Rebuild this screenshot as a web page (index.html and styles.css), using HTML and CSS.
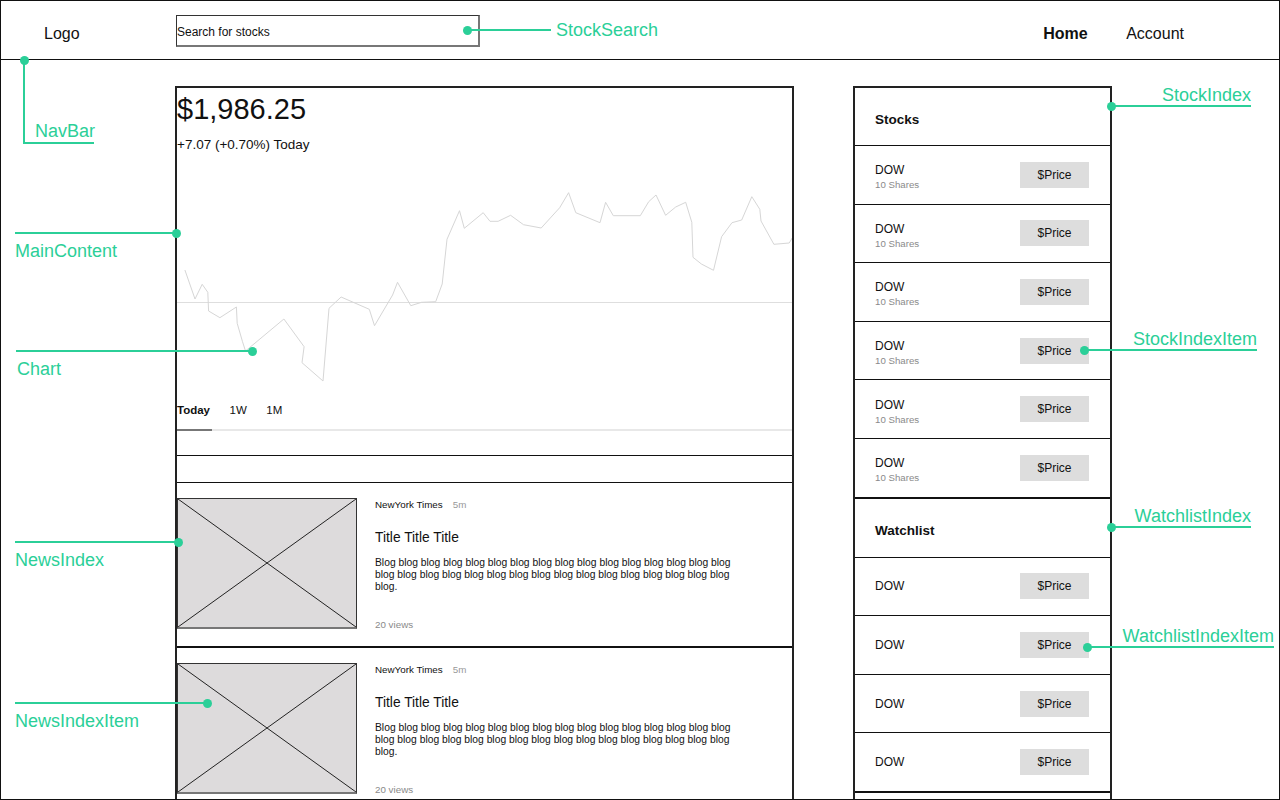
FILE: index.html
```html
<!DOCTYPE html>
<html lang="en">
<head>
<meta charset="utf-8">
<title>Stocks wireframe</title>
<link rel="stylesheet" href="styles.css">
</head>
<body>
<div class="page">
  <header class="nav">
    <div class="nav-logo">Logo</div>
    <div class="search">Search for stocks</div>
    <nav class="nav-links">
      <a class="nav-link nav-link--active">Home</a>
      <a class="nav-link">Account</a>
    </nav>
  </header>

  <div class="content">
    <main class="main">
      <div class="price">$1,986.25</div>
      <div class="change">+7.07 (+0.70%) Today</div>
      <svg class="chart" width="615" height="250" viewBox="177 153 615 250">
        <line x1="177" y1="302.5" x2="792" y2="302.5" stroke="#dedede" stroke-width="1"/>
        <polyline fill="none" stroke="#d6d6d6" stroke-width="1" points="184.9,270 195,299 202.2,284.3 207.8,292.3 208.6,311 219.9,317.7 236.4,307 237.2,323.3 242.5,341.7 245.5,351 283.9,319 304.1,346.7 302,362.7 323,381 329,308.3 341.1,297 369.3,309.3 374.5,325.7 392.6,295 397.5,282.3 410.8,305.7 421.6,302.3 435.7,301.7 442.2,284 447,239.3 459.5,210.7 464.3,228.3 483.2,212.7 490,221.3 498.1,221.3 510.6,215.3 523.5,224.7 541.2,228 559.7,207.7 568.6,192.7 575.8,212.7 600,222.7 605.6,202.3 613.3,215.7 640.3,215.7 648.7,201.7 656,195 665.6,215.3 675.7,207 685.7,202.3 691.8,222.3 693,257.3 701.4,264 713.5,270.3 721.6,236.7 732,222.7 741.7,220 751.8,196.7 759.8,209.3 761,221 773.9,244.3 789.2,243 794,235"/>
      </svg>
      <div class="tabs">
        <span class="tab tab--active">Today</span>
        <span class="tab">1W</span>
        <span class="tab">1M</span>
      </div>
      <div class="news-band"></div>
      <div class="news">
        <article class="news-item">
          <div class="thumb">
            <svg width="100%" height="100%" viewBox="0 0 100 100" preserveAspectRatio="none">
              <line x1="0" y1="0" x2="100" y2="100" stroke="#222" stroke-width="1" vector-effect="non-scaling-stroke"/>
              <line x1="100" y1="0" x2="0" y2="100" stroke="#222" stroke-width="1" vector-effect="non-scaling-stroke"/>
            </svg>
          </div>
          <div class="news-body">
            <div class="news-meta">NewYork Times<span class="news-age">5m</span></div>
            <div class="news-title">Title Title Title</div>
            <p class="news-text">Blog blog blog blog blog blog blog blog blog blog blog blog blog blog blog blog blog blog blog blog blog blog blog blog blog blog blog blog blog blog blog blog blog.</p>
            <div class="news-views">20 views</div>
          </div>
        </article>
        <article class="news-item">
          <div class="thumb">
            <svg width="100%" height="100%" viewBox="0 0 100 100" preserveAspectRatio="none">
              <line x1="0" y1="0" x2="100" y2="100" stroke="#222" stroke-width="1" vector-effect="non-scaling-stroke"/>
              <line x1="100" y1="0" x2="0" y2="100" stroke="#222" stroke-width="1" vector-effect="non-scaling-stroke"/>
            </svg>
          </div>
          <div class="news-body">
            <div class="news-meta">NewYork Times<span class="news-age">5m</span></div>
            <div class="news-title">Title Title Title</div>
            <p class="news-text">Blog blog blog blog blog blog blog blog blog blog blog blog blog blog blog blog blog blog blog blog blog blog blog blog blog blog blog blog blog blog blog blog blog.</p>
            <div class="news-views">20 views</div>
          </div>
        </article>
      </div>
    </main>

    <aside class="sidebar">
      <section class="index">
        <div class="index-header">Stocks</div>
        <div class="index-item"><div class="holding"><div class="ticker">DOW</div><div class="shares">10 Shares</div></div><div class="price-btn">$Price</div></div>
        <div class="index-item"><div class="holding"><div class="ticker">DOW</div><div class="shares">10 Shares</div></div><div class="price-btn">$Price</div></div>
        <div class="index-item"><div class="holding"><div class="ticker">DOW</div><div class="shares">10 Shares</div></div><div class="price-btn">$Price</div></div>
        <div class="index-item"><div class="holding"><div class="ticker">DOW</div><div class="shares">10 Shares</div></div><div class="price-btn">$Price</div></div>
        <div class="index-item"><div class="holding"><div class="ticker">DOW</div><div class="shares">10 Shares</div></div><div class="price-btn">$Price</div></div>
        <div class="index-item"><div class="holding"><div class="ticker">DOW</div><div class="shares">10 Shares</div></div><div class="price-btn">$Price</div></div>
      </section>
      <section class="index index--watch">
        <div class="index-header">Watchlist</div>
        <div class="index-item"><div class="ticker">DOW</div><div class="price-btn">$Price</div></div>
        <div class="index-item"><div class="ticker">DOW</div><div class="price-btn">$Price</div></div>
        <div class="index-item"><div class="ticker">DOW</div><div class="price-btn">$Price</div></div>
        <div class="index-item"><div class="ticker">DOW</div><div class="price-btn">$Price</div></div>
      </section>
    </aside>
  </div>
</div>

<div class="note note--search"><span class="note-label note-label--after">StockSearch</span></div>
<div class="note-elbow"><span class="note-label note-label--elbow">NavBar</span></div>
<div class="note note--main"><span class="note-label note-label--below">MainContent</span></div>
<div class="note note--chart"><span class="note-label note-label--below">Chart</span></div>
<div class="note note--newsindex"><span class="note-label note-label--below">NewsIndex</span></div>
<div class="note note--newsitem"><span class="note-label note-label--below">NewsIndexItem</span></div>
<div class="note note--stockindex"><span class="note-label note-label--above">StockIndex</span></div>
<div class="note note--stockitem"><span class="note-label note-label--above">StockIndexItem</span></div>
<div class="note note--watchindex"><span class="note-label note-label--above">WatchlistIndex</span></div>
<div class="note note--watchitem"><span class="note-label note-label--above">WatchlistIndexItem</span></div>
</body>
</html>
```

FILE: styles.css
```css
html, body {
  margin: 0;
  padding: 0;
  overflow: hidden;
}

body {
  position: relative;
  width: 1280px;
  height: 800px;
  font-family: "Liberation Sans", Arial, sans-serif;
  color: #111;
  background: #fff;
}

.page {
  box-sizing: border-box;
  width: 1280px;
  height: 800px;
  border: 1px solid #111;
  overflow: hidden;
}

/* ---------- Nav ---------- */
.nav {
  box-sizing: border-box;
  height: 59px;
  padding-top: 2px;
  border-bottom: 1px solid #111;
  display: flex;
  align-items: center;
  padding-left: 43px;
  padding-right: 95px;
}

.nav-logo {
  width: 132px;
  font-size: 16px;
  padding-top: 5px;
}

.search {
  box-sizing: border-box;
  width: 304px;
  height: 32px;
  border: 1px solid #333;
  border-right: 2px solid #777;
  border-bottom: 2px solid #777;
  font-size: 12px;
  line-height: 14px;
  display: flex;
  align-items: center;
  padding-top: 2px;
}

.nav-links {
  margin-left: auto;
  display: flex;
  gap: 38.5px;
  padding-top: 5px;
}

.nav-link {
  font-size: 16px;
  color: #111;
}

.nav-link--active {
  font-weight: bold;
}

/* ---------- Layout ---------- */
.content {
  display: flex;
  align-items: flex-start;
  gap: 59px;
  padding-top: 26px;
  padding-left: 174px;
}

.main {
  box-sizing: border-box;
  flex: none;
  width: 619px;
  height: 760px;
  border: 2px solid #222;
  border-bottom: none;
}

.price {
  font-size: 29px;
  line-height: 34px;
  margin-top: 4px;
}

.change {
  font-size: 13.5px;
  line-height: 16px;
  margin-top: 11px;
}

.chart {
  display: block;
  width: 615px;
  height: 250px;
}

.tabs {
  display: flex;
  border-bottom: 2px solid #e8e8e8;
}

.tab {
  font-size: 11.5px;
  line-height: 14px;
  padding-bottom: 12px;
  margin-right: 19.5px;
}

.tab--active {
  font-weight: bold;
  padding-right: 2px;
  margin-right: 17.5px;
  border-bottom: 2px solid #777;
  margin-bottom: -2px;
}

.news-band {
  margin-top: 24px;
  height: 26px;
  border-top: 1px solid #111;
  border-bottom: 1px solid #111;
}

.news-item {
  display: flex;
  gap: 18px;
  padding: 15px 0;
  border-bottom: 2px solid #111;
}

.thumb {
  box-sizing: border-box;
  flex: none;
  width: 180px;
  height: 131px;
  background: #dddbdc;
  border: 1px solid #333;
  border-bottom: 2px solid #777;
}

.thumb svg {
  display: block;
}

.news-body {
  display: flex;
  flex-direction: column;
}

.news-meta {
  font-size: 9.8px;
  line-height: 14px;
}

.news-age {
  color: #999;
  margin-left: 10px;
}

.news-title {
  font-size: 13.8px;
  line-height: 18px;
  margin-top: 17px;
}

.news-text {
  width: 362px;
  margin: 10px 0 0;
  font-size: 10.3px;
  line-height: 12px;
}

.news-views {
  font-size: 9.8px;
  line-height: 12px;
  color: #8a8a8a;
  margin-top: 26px;
}

/* ---------- Sidebar ---------- */
.sidebar {
  box-sizing: border-box;
  flex: none;
  width: 259px;
  height: 760px;
  border: 2px solid #222;
  border-bottom: none;
}

.index--watch {
  border-top: 2px solid #111;
  border-bottom: 2px solid #111;
}

.index-header {
  box-sizing: border-box;
  height: 57px;
  padding: 5px 0 0 20px;
  display: flex;
  align-items: center;
  font-weight: bold;
  font-size: 13.5px;
}

.index--watch .index-header {
  height: 58px;
}

.index-item {
  box-sizing: border-box;
  height: 58.6px;
  border-top: 1px solid #111;
  display: flex;
  align-items: center;
  justify-content: space-between;
  padding: 0 21px 0 20px;
}

.holding {
  margin-top: 5px;
}

.ticker {
  font-size: 12px;
  line-height: 14px;
}

.shares {
  font-size: 9.7px;
  line-height: 12px;
  margin-top: 2px;
  color: #8a8a8a;
}

.price-btn {
  width: 69px;
  height: 26px;
  background: #dddddd;
  font-size: 12px;
  display: flex;
  align-items: center;
  justify-content: center;
}

/* ---------- Annotations ---------- */
.note {
  position: absolute;
  height: 2px;
  background: #2bcf98;
}

.note::after {
  content: "";
  position: absolute;
  top: -3.5px;
  width: 9px;
  height: 9px;
  border-radius: 50%;
  background: #2bcf98;
}

.note-label {
  position: absolute;
  font-family: "Liberation Sans", Arial, sans-serif;
  font-size: 18px;
  line-height: 20px;
  color: #2bcf98;
  white-space: nowrap;
}

.note-label--after {
  left: calc(100% + 5px);
  top: -9px;
}

.note-label--below {
  left: 0;
  top: 9px;
}

.note-label--above {
  right: 0;
  bottom: 2px;
}

.note--search { left: 467px; top: 29px; width: 84px; }
.note--search::after { left: -4.5px; }

.note--main { left: 15px; top: 232px; width: 161px; }
.note--main::after { right: -4.5px; }

.note--chart { left: 16px; top: 350px; width: 236px; }
.note--chart::after { right: -4.5px; }
.note--chart .note-label { left: 1px; }

.note--newsindex { left: 15px; top: 541px; width: 163px; }
.note--newsindex::after { right: -4.5px; }

.note--newsitem { left: 15px; top: 702px; width: 192px; }
.note--newsitem::after { right: -4.5px; }

.note--stockindex { left: 1111px; top: 105px; width: 140px; }
.note--stockindex::after { left: -4.5px; }

.note--stockitem { left: 1084px; top: 349px; width: 173px; }
.note--stockitem::after { left: -4.5px; }

.note--watchindex { left: 1111px; top: 526px; width: 140px; }
.note--watchindex::after { left: -4.5px; }

.note--watchitem { left: 1087px; top: 646px; width: 187px; }
.note--watchitem::after { left: -4.5px; }

.note-elbow {
  position: absolute;
  box-sizing: border-box;
  left: 23px;
  top: 60px;
  width: 71px;
  height: 84px;
  border-left: 2px solid #2bcf98;
  border-bottom: 2px solid #2bcf98;
}

.note-elbow::after {
  content: "";
  position: absolute;
  left: -5.5px;
  top: -4.5px;
  width: 9px;
  height: 9px;
  border-radius: 50%;
  background: #2bcf98;
}

.note-label--elbow {
  left: 10px;
  top: 61px;
}
```
